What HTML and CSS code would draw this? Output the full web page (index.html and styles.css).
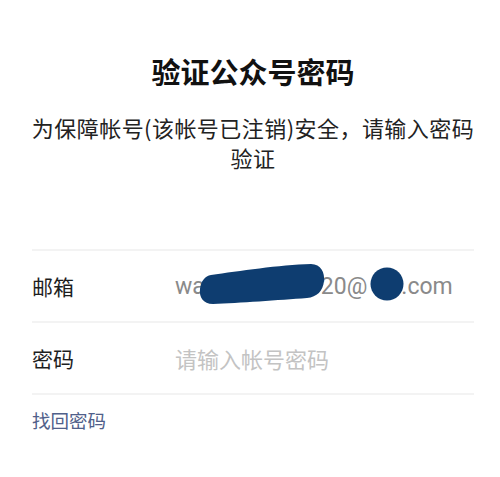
FILE: index.html
```html
<!DOCTYPE html>
<html lang="zh-CN">
<head>
<meta charset="utf-8">
<title>验证公众号密码</title>
<link rel="stylesheet" href="styles.css">
</head>
<body>
<div class="page">
  <h1 class="title">验证公众号密码</h1>
  <p class="desc">为保障帐号(该帐号已注销)安全，请输入密码验证</p>
  <div class="form">
    <div class="row">
      <span class="label">邮箱</span>
      <span class="value email">wa<span class="mask m1"><svg width="126" height="42" viewBox="0 0 126 42"><path d="M12,12 C40,8 80,2 112,1 C122,1 126,10 125,18 C124,28 118,34 108,35 C80,37 40,40 14,41 C4,41 0,34 1,26 C2,18 6,13 12,12 Z" fill="#0e3d70"/></svg></span>20@<span class="mask m2"><svg width="34" height="34" viewBox="0 0 34 34"><ellipse cx="17" cy="17" rx="16.5" ry="16.5" fill="#0e3d70"/></svg></span>.com</span>
    </div>
    <div class="row">
      <span class="label">密码</span>
      <span class="value placeholder">请输入帐号密码</span>
    </div>
  </div>
  <a class="link" href="#">找回密码</a>
</div>
</body>
</html>
```

FILE: styles.css
```css
html, body {
  margin: 0;
  padding: 0;
  background: #ffffff;
}
body {
  font-family: "Noto Sans CJK SC", "Noto Sans", sans-serif;
  color: #1a1a1a;
}
.page {
  padding: 51px 26px 0 32px;
  display: flex;
  flex-direction: column;
}
.title {
  margin: 0;
  font-size: 29px;
  line-height: 40px;
  font-weight: 700;
  text-align: center;
  color: #111111;
}
.desc {
  margin: 21px -6px 0;
  font-size: 22px;
  letter-spacing: 0.45px;
  line-height: 30px;
  text-align: center;
  color: #222222;
}
.form {
  margin-top: 77px;
  border-top: 2px solid #f3f3f3;
}
.row {
  height: 70px;
  display: flex;
  align-items: center;
  border-bottom: 2px solid #f3f3f3;
}
.label {
  width: 143px;
  flex: none;
  font-size: 21px;
  color: #1e1e1e;
}
.value {
  font-size: 23px;
}
.email {
  font-family: Roboto, "Noto Sans CJK SC", sans-serif;
  color: #8a8a8a;
}
.placeholder {
  color: #c3c3c3;
  font-size: 22px;
}
.mask {
  position: relative;
  display: inline-block;
  height: 16px;
}
.mask svg {
  position: absolute;
  display: block;
}
.m1 {
  width: 116px;
}
.m1 svg {
  left: -6px;
  top: -15px;
}
.m2 {
  width: 34px;
}
.m2 svg {
  left: 3px;
  top: -11px;
}
.link {
  align-self: flex-start;
  margin-top: 13px;
  font-size: 18.5px;
  line-height: 24px;
  color: #50608a;
  text-decoration: none;
}
```
